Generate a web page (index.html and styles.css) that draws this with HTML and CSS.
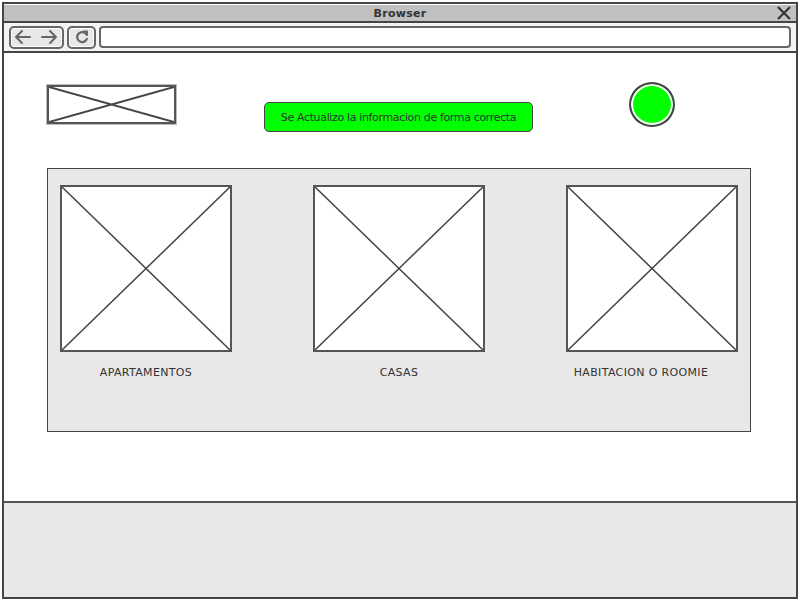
FILE: index.html
```html
<!DOCTYPE html>
<html>
<head>
<meta charset="utf-8">
<link rel="stylesheet" href="styles.css">
</head>
<body>
<div class="frame">
  <div class="titlebar">
    <span class="title">Browser</span>
    <svg class="close" width="14" height="14" viewBox="0 0 14 14"><path d="M1 1L13 13M13 1L1 13" stroke="#333" stroke-width="2.2" fill="none"/></svg>
  </div>
  <div class="toolbar">
    <div class="btn navbtn">
      <svg width="48" height="16" viewBox="0 0 48 16"><path d="M3 8H17M3 8L9 2M3 8L9 14" stroke="#666" stroke-width="2" fill="none" stroke-linecap="round" stroke-linejoin="round"/><path d="M29 8H43M43 8L37 2M43 8L37 14" stroke="#666" stroke-width="2" fill="none" stroke-linecap="round" stroke-linejoin="round"/></svg>
    </div>
    <div class="btn refresh">
      <svg width="16" height="16" viewBox="0 0 16 16"><path d="M12.5 5.5A5 5 0 1 0 12.8 10" stroke="#666" stroke-width="2.2" fill="none" stroke-linecap="round"/><path d="M9.5 2.5L13 2.5L13 6" stroke="#666" stroke-width="2" fill="none" stroke-linecap="round" stroke-linejoin="round"/></svg>
    </div>
    <div class="url"></div>
  </div>
  <div class="content">
    <div class="header">
      <div class="logo">
        <svg class="xph" viewBox="0 0 100 100" preserveAspectRatio="none"><path d="M0 0L100 100M100 0L0 100" stroke="#444" stroke-width="2" vector-effect="non-scaling-stroke" fill="none"/></svg>
      </div>
      <div class="alert">Se Actualizo la informacion de forma correcta</div>
      <div class="dot"></div>
    </div>
    <div class="panel">
      <div class="card">
        <div class="img"><svg class="xph" viewBox="0 0 100 100" preserveAspectRatio="none"><path d="M0 0L100 100M100 0L0 100" stroke="#444" stroke-width="1.5" vector-effect="non-scaling-stroke" fill="none"/></svg></div>
        <div class="label">APARTAMENTOS</div>
      </div>
      <div class="card">
        <div class="img"><svg class="xph" viewBox="0 0 100 100" preserveAspectRatio="none"><path d="M0 0L100 100M100 0L0 100" stroke="#444" stroke-width="1.5" vector-effect="non-scaling-stroke" fill="none"/></svg></div>
        <div class="label">CASAS</div>
      </div>
      <div class="card">
        <div class="img"><svg class="xph" viewBox="0 0 100 100" preserveAspectRatio="none"><path d="M0 0L100 100M100 0L0 100" stroke="#444" stroke-width="1.5" vector-effect="non-scaling-stroke" fill="none"/></svg></div>
        <div class="label label-shift">HABITACION O ROOMIE</div>
      </div>
    </div>
  </div>
  <div class="footer"></div>
</div>
</body>
</html>
```

FILE: styles.css
```css
* { box-sizing: border-box; }
html, body { margin: 0; padding: 0; background: #fff; }
body { width: 800px; height: 601px; overflow: hidden; font-family: "DejaVu Sans", sans-serif; color: #333; }

.frame {
  margin: 2px;
  width: 796px;
  height: 597px;
  border: 2px solid #444;
  display: flex;
  flex-direction: column;
  background: #fff;
}

.titlebar {
  height: 19px;
  background: #c0c0c0;
  border-top: 1px solid #fff;
  border-bottom: 2px solid #444;
  display: flex;
  align-items: center;
  justify-content: center;
  position: relative;
}
.title { font-weight: bold; font-size: 11px; color: #333; letter-spacing: 0.3px; }
.close { position: absolute; right: 5px; top: 1px; }

.toolbar {
  height: 30px;
  background: #f4f4f4;
  border-bottom: 2px solid #444;
  display: flex;
  align-items: center;
  padding: 0 5px 0 5px;
  gap: 3px;
}
.btn {
  height: 23px;
  border: 2px solid #666;
  border-radius: 5px;
  background: #e8e8e8;
  box-shadow: inset 0 0 0 1px #fff;
  display: flex;
  align-items: center;
  justify-content: center;
}
.navbtn { width: 55px; }
.refresh { width: 29px; }
.url {
  flex: 1;
  height: 22px;
  border: 2px solid #666;
  border-radius: 4px;
  background: #fff;
}

.content {
  flex: 1;
  padding: 32px 0 0 43px;
}
.header {
  display: flex;
  align-items: flex-start;
  height: 83px;
}
.logo {
  width: 129px;
  height: 39px;
  border: 2px solid #555;
  box-shadow: 0 0 0 1px #bbb;
  background: #fff;
  position: relative;
}
.xph { display: block; width: 100%; height: 100%; }
.alert {
  margin: 17px 0 0 88px;
  width: 269px;
  height: 30px;
  background: #00ff00;
  border: 1px solid #444;
  border-radius: 5px;
  font-size: 11px;
  letter-spacing: -0.35px;
  display: flex;
  align-items: center;
  justify-content: center;
  color: #333;
}
.dot {
  margin: -3px 0 0 96px;
  width: 46px;
  height: 45px;
  border-radius: 50%;
  border: 2px solid #444;
  background: #00ff00;
  box-shadow: inset 0 0 0 2px #fff;
}

.panel {
  width: 704px;
  height: 264px;
  background: #e8e8e8;
  border: 1px solid #444;
  display: flex;
  gap: 81px;
  padding: 16px 0 0 12px;
}
.card { width: 172px; display: flex; flex-direction: column; align-items: center; }
.img {
  width: 172px;
  height: 167px;
  background: #fff;
  border: 2px solid #555;
}
.label {
  margin-top: 14px;
  font-size: 11px;
  letter-spacing: 0.35px;
  color: #333;
  text-align: center;
}
.label-shift { margin-right: 22px; }

.footer {
  height: 96px;
  background: #e8e8e8;
  border-top: 2px solid #555;
}
```
